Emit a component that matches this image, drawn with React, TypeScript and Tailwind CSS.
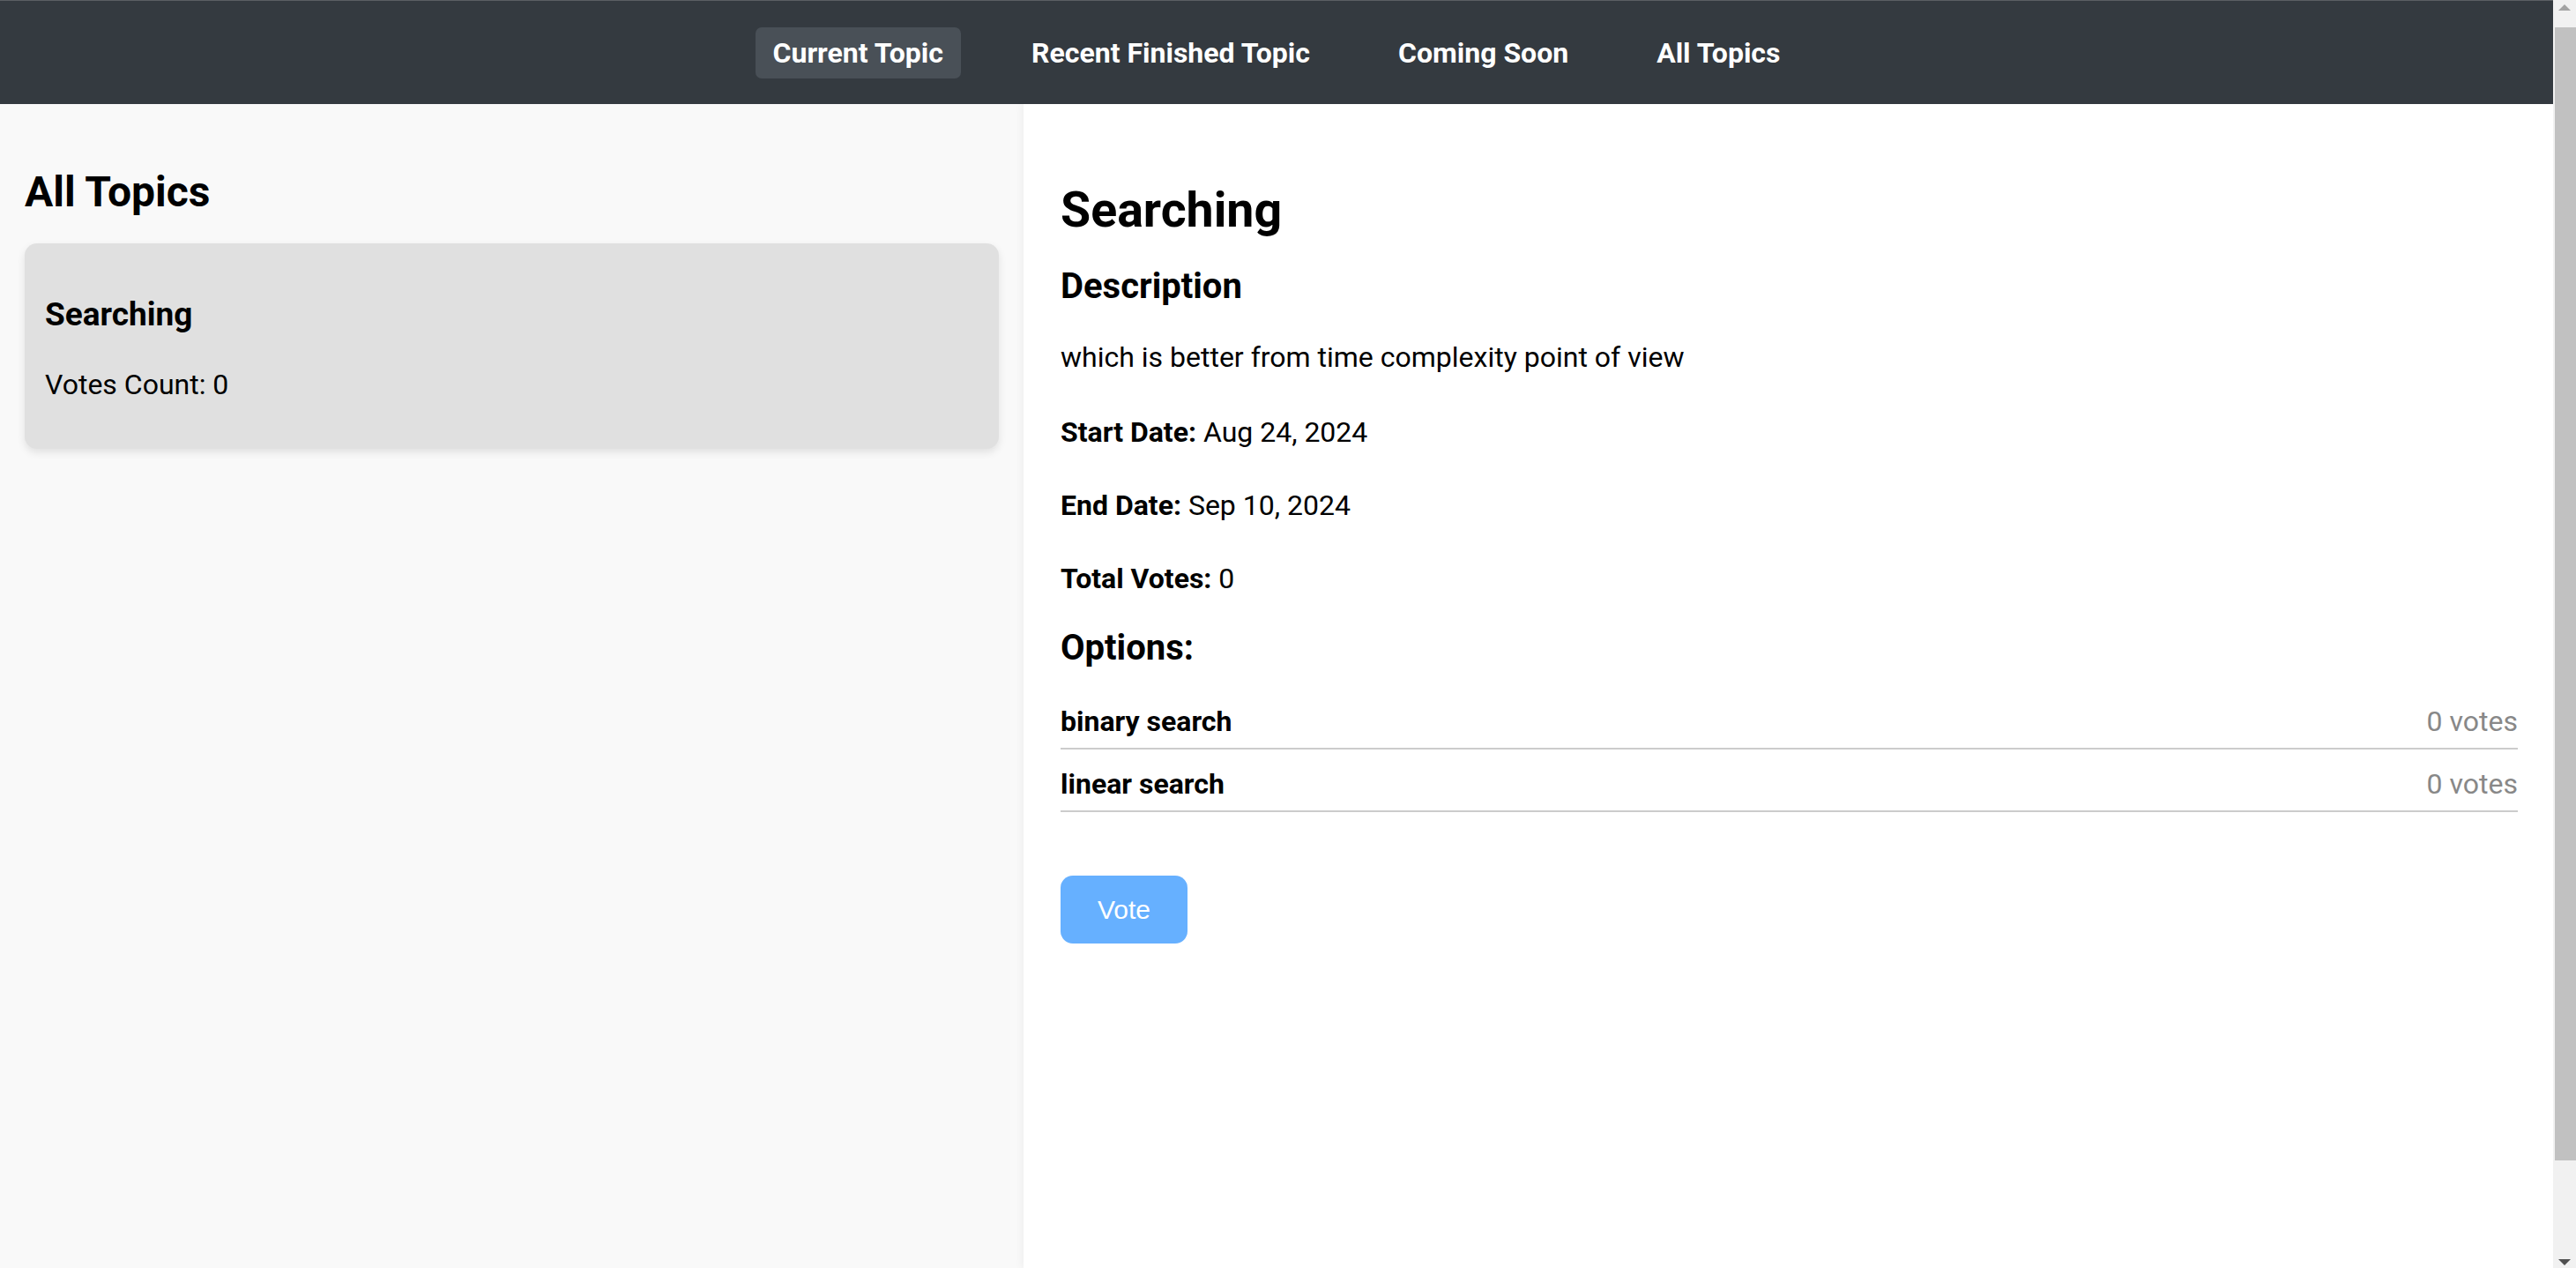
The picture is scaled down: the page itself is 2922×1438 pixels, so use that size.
import React from "react";

const navItems = ["Current Topic", "Recent Finished Topic", "Coming Soon", "All Topics"];

const options = [
  { name: "binary search", votes: 0 },
  { name: "linear search", votes: 0 },
];

function FakeScrollbar() {
  return (
    <div className="w-[26px] shrink-0 h-screen bg-[#f1f1f1] flex flex-col">
      <div className="h-[31px] flex items-center justify-center">
        <div className="w-0 h-0 border-l-[7px] border-r-[7px] border-b-[7px] border-l-transparent border-r-transparent border-b-[#a3a3a3] -mt-[14px]" />
      </div>
      <div className="ml-[2px] h-[1285px] bg-[#c1c1c1]" />
      <div className="flex-1" />
      <div className="h-[31px] flex items-center justify-center">
        <div className="w-0 h-0 border-l-[7px] border-r-[7px] border-t-[7px] border-l-transparent border-r-transparent border-t-[#505050] mt-[18px]" />
      </div>
    </div>
  );
}

export default function App() {
  return (
    <div
      className="h-screen overflow-hidden flex bg-white text-black"
      style={{ fontFamily: "Roboto, 'Noto Sans', sans-serif" }}
    >
      <div className="flex-1 min-w-0 h-screen overflow-hidden flex flex-col">
        {/* Navbar */}
        <nav className="h-[118px] shrink-0 bg-[#343a40] border-t border-[#5b5f64] flex items-center justify-center gap-[60px]">
          {navItems.map((item, i) => (
            <a
              key={item}
              className={
                i === 0
                  ? "px-[20px] py-[10px] rounded-[7px] bg-[#495057] text-white font-bold text-[32px] leading-[normal] cursor-pointer"
                  : "px-[20px] py-[10px] rounded-[7px] text-white font-bold text-[32px] leading-[normal] cursor-pointer"
              }
            >
              {item}
            </a>
          ))}
        </nav>

        {/* Main */}
        <div className="flex flex-1">
          {/* Left panel */}
          <aside className="w-[1161px] shrink-0 bg-[#f9f9f9] px-[28px] pt-[71px] flex flex-col">
            <h2 className="text-[48px] font-bold leading-[normal]">All Topics</h2>
            <div className="mt-[30px] rounded-[14px] bg-[#e0e0e0] shadow-[0_4px_10px_rgba(0,0,0,0.1)] px-[23px] pt-[59px] pb-[54px] flex flex-col cursor-pointer">
              <h3 className="text-[37px] font-bold leading-[normal]">Searching</h3>
              <p className="mt-[39px] text-[32px] leading-[normal]">Votes Count: 0</p>
            </div>
          </aside>

          {/* Right panel */}
          <main className="relative z-10 flex-1 bg-white shadow-[-3px_0_8px_rgba(0,0,0,0.04)] pl-[42px] pr-[40px] pt-[88px] flex flex-col">
            <h1 className="text-[55.5px] font-bold leading-[normal]">Searching</h1>
            <h3 className="mt-[30px] text-[40px] font-bold leading-[normal]">Description</h3>
            <p className="mt-[38px] text-[32px] leading-[normal]">which is better from time complexity point of view</p>
            <p className="mt-[47px] text-[32px] leading-[normal]">
              <strong className="font-bold">Start Date:</strong> Aug 24, 2024
            </p>
            <p className="mt-[45px] text-[32px] leading-[normal]">
              <strong className="font-bold">End Date:</strong> Sep 10, 2024
            </p>
            <p className="mt-[45px] text-[32px] leading-[normal]">
              <strong className="font-bold">Total Votes:</strong> 0
            </p>
            <h3 className="mt-[36px] text-[40px] font-bold leading-[normal]">Options:</h3>
            <ul className="mt-[30px] flex flex-col gap-[9px]">
              {options.map((o) => (
                <li
                  key={o.name}
                  className="flex items-center justify-between pt-[11px] pb-[11px] border-b-2 border-[#cccccc] text-[32px] leading-[normal] cursor-pointer"
                >
                  <span className="font-bold">{o.name}</span>
                  <span className="text-[#888888]">{o.votes} votes</span>
                </li>
              ))}
            </ul>
            <div className="mt-[72px]">
              <button
                className="w-[144px] h-[77px] rounded-[14px] bg-[#66b0ff] text-white text-[30px] leading-none"
                style={{ fontFamily: "'Liberation Sans', Arial, sans-serif" }}
              >
                Vote
              </button>
            </div>
          </main>
        </div>
      </div>
      <FakeScrollbar />
    </div>
  );
}
